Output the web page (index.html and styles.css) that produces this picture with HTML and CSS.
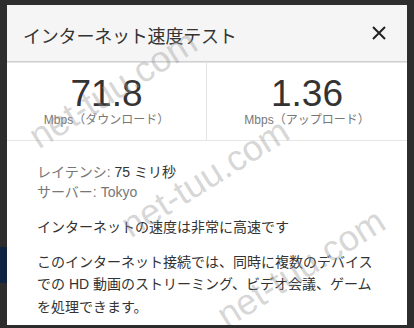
FILE: index.html
```html
<!DOCTYPE html>
<html lang="ja">
<head>
<meta charset="utf-8">
<title>インターネット速度テスト</title>
<link rel="stylesheet" href="styles.css">
</head>
<body>
<div class="backdrop-block"></div>
<div class="dialog">
  <header class="head">
    <h1 class="title">インターネット速度テスト</h1>
    <svg class="close" width="14" height="14" viewBox="0 0 14 14" aria-label="閉じる">
      <path d="M1 1 L13 13 M13 1 L1 13" stroke="#222" stroke-width="2" fill="none"/>
    </svg>
  </header>
  <section class="stats">
    <div class="stat">
      <div class="num">71.8</div>
      <div class="unit">Mbps（ダウンロード）</div>
    </div>
    <div class="stat">
      <div class="num">1.36</div>
      <div class="unit">Mbps（アップロード）</div>
    </div>
  </section>
  <section class="info">
    <div class="line"><span class="label">レイテンシ:</span> 75 ミリ秒</div>
    <div class="line"><span class="label">サーバー:</span> <span class="label">Tokyo</span></div>
    <p class="verdict">インターネットの速度は非常に高速です</p>
    <p class="desc">このインターネット接続では、同時に複数のデバイス<br>での HD 動画のストリーミング、ビデオ会議、ゲーム<br>を処理できます。</p>
  </section>
  <span class="wm wm1">net-tuu.com</span>
  <span class="wm wm2">net-tuu.com</span>
  <span class="wm wm3">net-tuu.com</span>
</div>
</body>
</html>
```
FILE: styles.css
```css
html, body {
  margin: 0;
  padding: 0;
}
body {
  background: #2d2d2d;
  width: 414px;
  height: 328px;
  overflow: hidden;
  position: relative;
  font-family: "Liberation Sans", Arial, "Noto Sans CJK JP", sans-serif;
  padding: 5px 7px 0 7px;
  box-sizing: border-box;
}
.backdrop-block {
  position: absolute;
  left: 0;
  top: 247px;
  width: 7px;
  height: 36px;
  background: #0f2442;
}
.dialog {
  position: relative;
  width: 400px;
  height: 320px;
  background: #fff;
  overflow: hidden;
}
.head {
  height: 56px;
  background: #f5f5f5;
  border-bottom: 1px solid #cfcfcf;
  box-shadow: 0 1px 0 #e4e4e4;
  display: flex;
  align-items: center;
  justify-content: space-between;
  padding: 0 21px 0 16px;
}
.title {
  margin: 0;
  padding-top: 4px;
  font-size: 18px;
  font-weight: 400;
  color: #333;
  letter-spacing: -0.2px;
}
.close {
  display: block;
}
.stats {
  display: grid;
  grid-template-columns: 200px 200px;
  border-bottom: 1px solid #e6e6e6;
  margin-top: 1px;
}
.stat {
  padding: 14px 0 13px;
  text-align: center;
}
.stat:first-child {
  border-right: 1px solid #e4e4e4;
}
.num {
  font-size: 37px;
  line-height: 34px;
  color: #333;
}
.unit {
  margin-top: 2px;
  font-size: 12px;
  line-height: 14px;
  color: #777;
}
.info {
  padding: 21px 20px 0 30px;
}
.line {
  font-size: 14px;
  line-height: 20px;
  color: #333;
}
.label {
  color: #777;
}
.verdict, .desc {
  margin: 14px 0 0;
  font-size: 14px;
  line-height: 22.5px;
  color: #333;
}
.desc {
  margin-top: 12px;
}
.wm {
  position: absolute;
  font-family: "Liberation Sans", Arial, sans-serif;
  font-size: 36px;
  line-height: 36px;
  color: rgba(150, 150, 150, 0.4);
  white-space: nowrap;
  pointer-events: none;
  transform: translate(-50%, -50%) rotate(-32deg);
}
.wm1 { left: 106px; top: 84px; }
.wm2 { left: 198px; top: 173px; }
.wm3 { left: 294px; top: 263px; }
```
